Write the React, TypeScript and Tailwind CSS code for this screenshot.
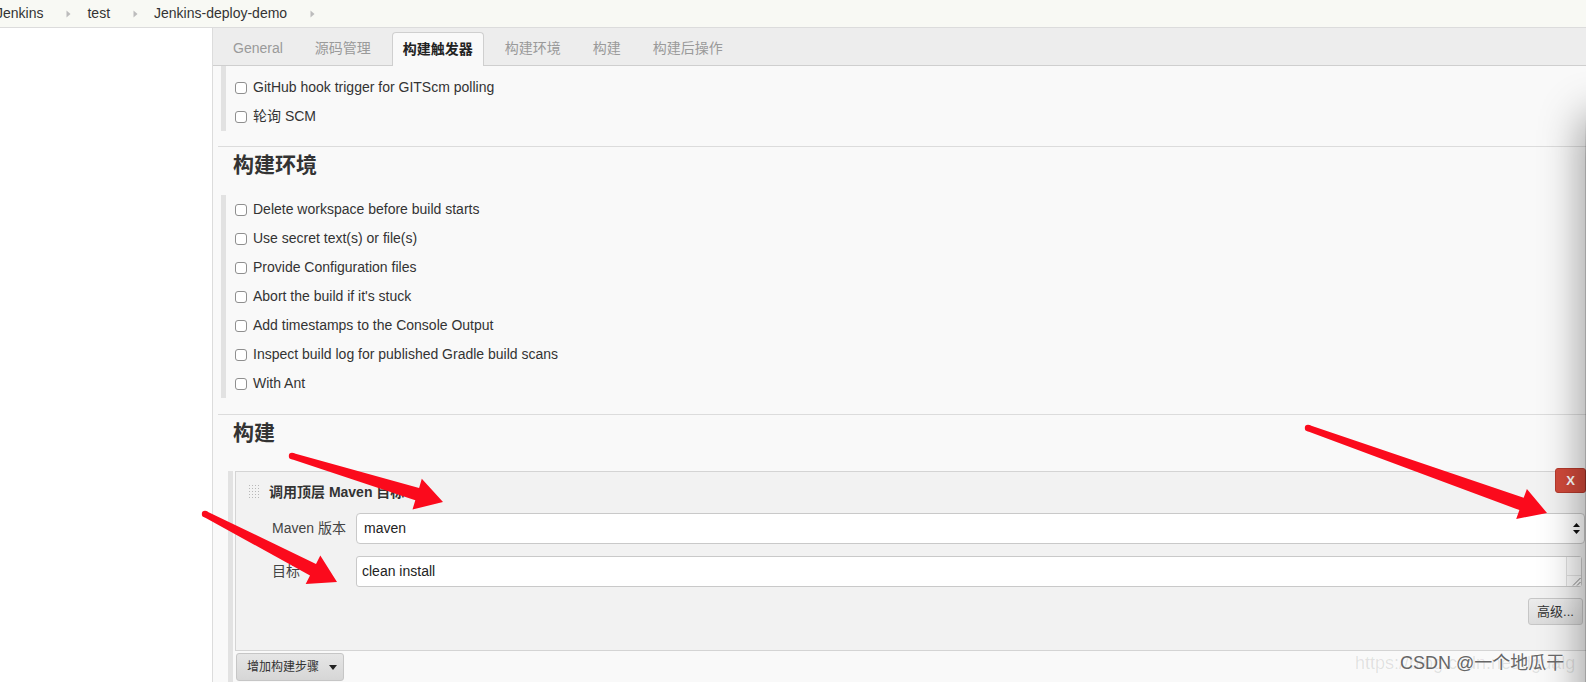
import type { ReactNode } from 'react';

const tabs = ['General', '源码管理', '构建触发器', '构建环境', '构建', '构建后操作'];
const activeTab = '构建触发器';

const triggerOptions = ['GitHub hook trigger for GITScm polling', '轮询 SCM'];
const envOptions = [
  'Delete workspace before build starts',
  'Use secret text(s) or file(s)',
  'Provide Configuration files',
  "Abort the build if it's stuck",
  'Add timestamps to the Console Output',
  'Inspect build log for published Gradle build scans',
  'With Ant',
];

type Pt = [number, number];

// red annotation arrows drawn over the screenshot
const arrows: { tail: Pt; tip: Pt }[] = [
  { tail: [292, 456], tip: [443, 502] },
  { tail: [205, 514], tip: [337, 582] },
  { tail: [1308, 428], tip: [1547, 513] },
];

function arrowPoints(tail: Pt, tip: Pt) {
  const headLen = 27;
  const headHalf = 16;
  const wTail = 3.2;
  const wHead = 6.5;
  const dx = tip[0] - tail[0];
  const dy = tip[1] - tail[1];
  const len = Math.hypot(dx, dy);
  const ux = dx / len;
  const uy = dy / len;
  const nx = -uy;
  const ny = ux;
  const bx = tip[0] - ux * headLen;
  const by = tip[1] - uy * headLen;
  const pts: Pt[] = [
    [tail[0] + nx * wTail, tail[1] + ny * wTail],
    [bx + nx * wHead, by + ny * wHead],
    [bx + nx * headHalf, by + ny * headHalf],
    tip,
    [bx - nx * headHalf, by - ny * headHalf],
    [bx - nx * wHead, by - ny * wHead],
    [tail[0] - nx * wTail, tail[1] - ny * wTail],
  ];
  return pts.map(p => `${p[0].toFixed(1)},${p[1].toFixed(1)}`).join(' ');
}

function Caret() {
  return (
    <svg width="5" height="8" viewBox="0 0 5 8" className="ml-[23px] mr-[16px]">
      <path d="M0.5 0.5 L4.5 4 L0.5 7.5 Z" fill="#bcbcbc" />
    </svg>
  );
}

function CheckRow({ label }: { label: string }) {
  return (
    <div className="h-[29px] flex items-center pl-[9px]">
      <span className="w-[12px] h-[12px] rounded-[3px] border border-[#8f8f8f] bg-white" />
      <span className="ml-[6px] text-[14px] text-[#333]">{label}</span>
    </div>
  );
}

function SectionHeading({ children }: { children: ReactNode }) {
  return (
    <div className="ml-[5px] border-t border-[#dcdcdc] pt-[3px]">
      <h2 className="pl-[15px] h-[30px] leading-[30px] text-[21px] font-bold text-[#333]">{children}</h2>
    </div>
  );
}

export default function App() {
  return (
    <div className="relative w-full h-[682px] overflow-hidden bg-white font-['Liberation_Sans','Noto_Sans_CJK_SC',sans-serif] flex flex-col">
      {/* breadcrumb */}
      <div className="h-[28px] shrink-0 border-b border-[#dcdcdc] bg-[#f8f9f4] flex items-center text-[14px] text-[#333]">
        <span className="-ml-[4px]">Jenkins</span>
        <Caret />
        <span>test</span>
        <Caret />
        <span>Jenkins-deploy-demo</span>
        <Caret />
      </div>

      <div className="flex flex-1 min-h-0">
        <aside className="w-[213px] shrink-0 bg-white border-r border-[#dcdcdc]" />

        <main className="flex-1 min-w-0 bg-[#f9f9f9] flex flex-col">
          {/* tabs */}
          <div className="h-[38px] shrink-0 bg-[#ededed] border-b border-[#cfcfcf] flex items-end pl-[9px] gap-[10px] text-[14px]">
            {tabs.map(t =>
              t === activeTab ? (
                <div
                  key={t}
                  className="h-[34px] -mb-px px-[10px] flex items-center bg-[#f9f9f9] border border-b-0 border-[#cfcfcf] rounded-t-[4px] font-bold text-[#222]"
                >
                  {t}
                </div>
              ) : (
                <div key={t} className="h-[33px] px-[11px] flex items-center text-[#9a9a9a]">
                  {t}
                </div>
              ),
            )}
          </div>

          {/* build triggers */}
          <div className="ml-[8px] border-l-[5px] border-[#e2e2e2] pt-[7px]">
            {triggerOptions.map(o => (
              <CheckRow key={o} label={o} />
            ))}
          </div>

          <div className="mt-[15px]">
            <SectionHeading>构建环境</SectionHeading>
          </div>
          <div className="mt-[15px] ml-[8px] border-l-[5px] border-[#e2e2e2]">
            {envOptions.map(o => (
              <CheckRow key={o} label={o} />
            ))}
          </div>

          <div className="mt-[16px]">
            <SectionHeading>构建</SectionHeading>
          </div>

          {/* build steps */}
          <div className="mt-[23px] ml-[15px] border-l-[5px] border-[#e2e2e2] pl-[2px] flex-1">
            <div className="relative border border-r-0 border-[#d4d4d4] bg-[#f2f2f2] pt-[12px] pb-[25px]">
              <button className="absolute top-[-4px] right-0 w-[31px] h-[25px] rounded-[3px] bg-[#d24a3b] border border-[#b53a2d] text-white text-[13px] font-bold flex items-center justify-center">
                X
              </button>

              <div className="pl-[12px] h-[16px] flex items-center">
                <span className="w-[13px] h-[16px] bg-[radial-gradient(#b8b8b8_0.8px,transparent_0.9px)] bg-[length:3px_3px]" />
                <span className="ml-[8px] text-[14px] font-bold text-[#333]">调用顶层 Maven 目标</span>
              </div>

              <div className="mt-[13px] flex items-center h-[31px] pl-[36px] pr-[1px]">
                <span className="w-[84px] shrink-0 text-[14px] text-[#444]">Maven 版本</span>
                <div className="flex-1 h-full bg-white border border-[#c9c9c9] rounded-[4px] flex items-center pl-[7px] pr-[4px]">
                  <span className="flex-1 text-[14px] text-[#222]">maven</span>
                  <svg width="7" height="11" viewBox="0 0 7 11">
                    <path d="M3.5 0 L7 4 L0 4 Z M3.5 11 L7 7 L0 7 Z" fill="#111" />
                  </svg>
                </div>
              </div>

              <div className="mt-[12px] flex items-center h-[31px] pl-[36px] pr-[4px]">
                <span className="w-[84px] shrink-0 text-[14px] text-[#444]">目标</span>
                <div className="relative flex-1 h-full bg-white border border-[#c9c9c9] rounded-[3px] flex items-center pl-[5px]">
                  <span className="text-[14px] text-[#222]">clean install</span>
                  <div className="absolute top-0 right-0 bottom-0 w-[15px] border-l border-[#e0e0e0] bg-[#fafafa] flex flex-col justify-end">
                    <div className="h-[11px] border-t border-[#e0e0e0] flex items-end justify-end">
                      <svg width="9" height="9" viewBox="0 0 9 9">
                        <path d="M8.5 1 L1 8.5 M8.5 5 L5 8.5" stroke="#777" strokeWidth="0.9" />
                      </svg>
                    </div>
                  </div>
                </div>
              </div>

              <div className="mt-[11px] flex justify-end pr-[3px]">
                <button className="w-[55px] h-[27px] rounded-[3px] border border-[#c6c6c6] bg-[linear-gradient(#ececec,#dcdcdc)] text-[13px] text-[#333]">
                  高级...
                </button>
              </div>
            </div>

            <button className="mt-[2px] ml-[1px] h-[28px] w-[108px] rounded-[3px] border border-[#c6c6c6] bg-[linear-gradient(#e6e6e6,#d6d6d6)] text-[12px] text-[#333] flex items-center pl-[10px]">
              增加构建步骤
              <svg width="8" height="5" viewBox="0 0 8 5" className="ml-[10px]">
                <path d="M0 0 L8 0 L4 5 Z" fill="#222" />
              </svg>
            </button>
          </div>
        </main>
      </div>

      {/* overlay window shadow at the right edge */}
      <div className="absolute top-[118px] bottom-[-60px] left-full w-[40px] shadow-[0_0_44px_2px_rgba(0,0,0,0.42)]" />
      <div className="absolute top-[118px] bottom-0 right-0 w-px bg-[linear-gradient(rgba(0,0,0,0),rgba(0,0,0,0.18)_40px)]" />

      {/* annotation arrows */}
      <svg className="absolute inset-0 pointer-events-none" width="1586" height="682">
        {arrows.map((a, i) => (
          <g key={i} fill="#fb0a1c">
            <polygon points={arrowPoints(a.tail, a.tip)} />
            <circle cx={a.tail[0]} cy={a.tail[1]} r="3.2" />
          </g>
        ))}
      </svg>

      {/* watermark */}
      <div className="absolute left-[1355px] top-[651px] text-[18px] leading-[24px] text-[rgba(0,0,0,0.1)] whitespace-nowrap">
        https://blog.csdn.net/dgualg
      </div>
      <div className="absolute left-[1400px] top-[651px] text-[18px] leading-[24px] text-[#666] whitespace-nowrap [text-shadow:0_0_2px_#fff]">
        CSDN @一个地瓜干
      </div>
    </div>
  );
}
